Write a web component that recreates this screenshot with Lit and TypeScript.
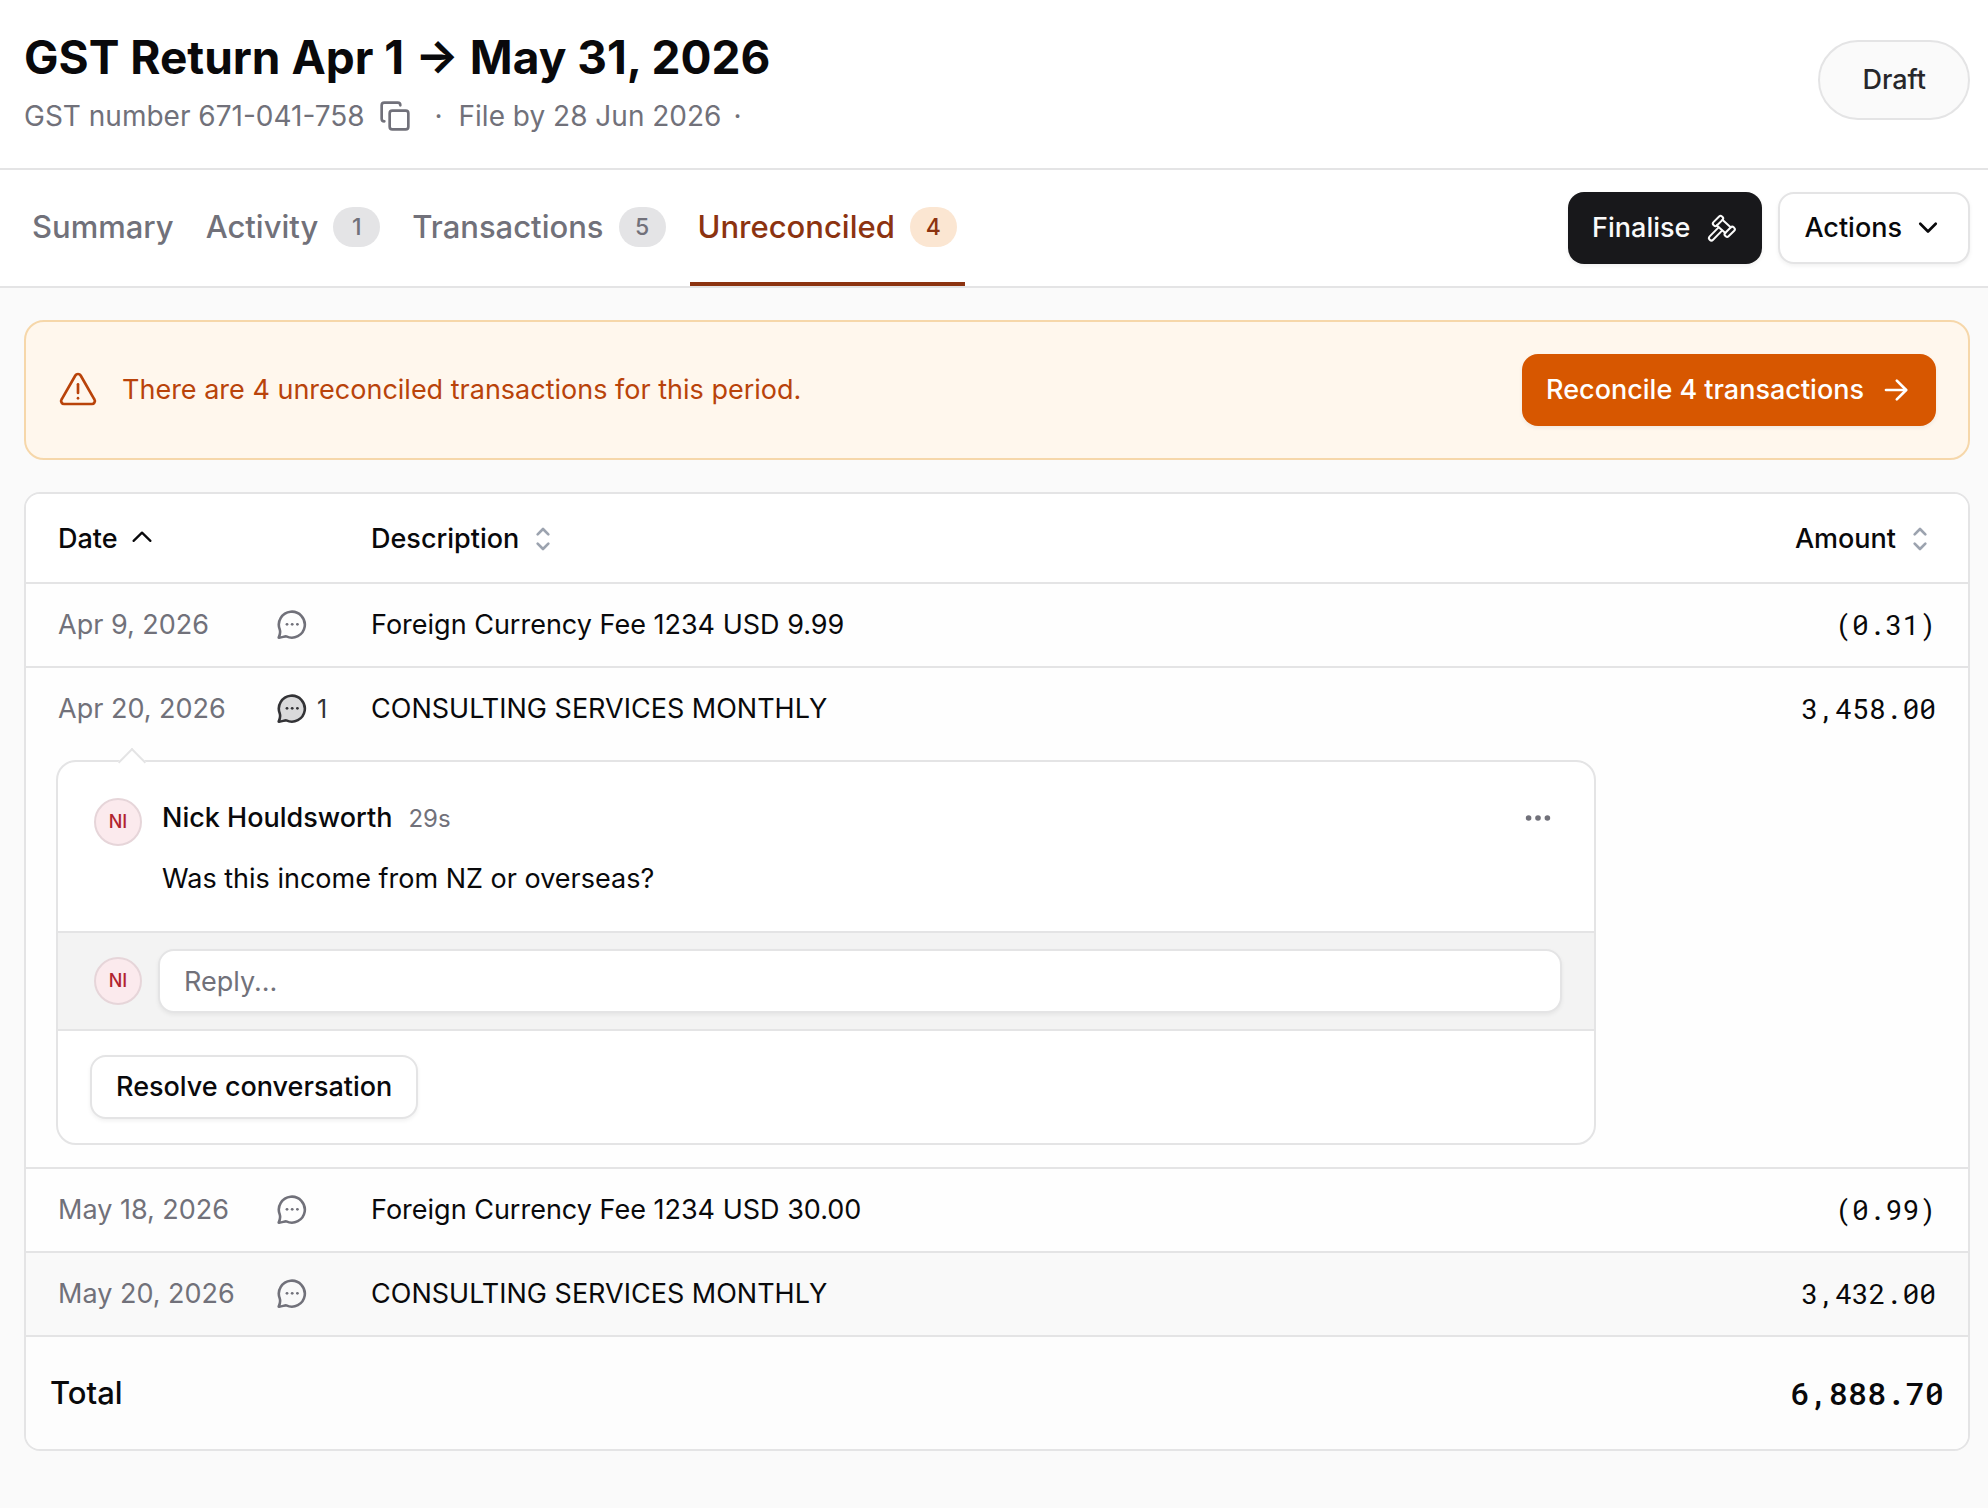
import { LitElement, html, css, svg, nothing } from "lit";
import { customElement, property } from "lit/decorators.js";

interface Transaction {
  date: string;
  description: string;
  amount: string;
  comments: number;
  highlighted?: boolean;
}

interface Tab {
  label: string;
  count?: number;
  active?: boolean;
}

const TABS: Tab[] = [
  { label: "Summary" },
  { label: "Activity", count: 1 },
  { label: "Transactions", count: 5 },
  { label: "Unreconciled", count: 4, active: true },
];

const TRANSACTIONS: Transaction[] = [
  { date: "Apr 9, 2026", description: "Foreign Currency Fee 1234 USD 9.99", amount: "(0.31)", comments: 0 },
  { date: "Apr 20, 2026", description: "CONSULTING SERVICES MONTHLY", amount: "3,458.00", comments: 1 },
  { date: "May 18, 2026", description: "Foreign Currency Fee 1234 USD 30.00", amount: "(0.99)", comments: 0 },
  { date: "May 20, 2026", description: "CONSULTING SERVICES MONTHLY", amount: "3,432.00", comments: 0, highlighted: true },
];

const ICONS = {
  copy: svg`<rect x="8" y="8" width="14" height="14" rx="2" /><path d="M4 16c-1.1 0-2-.9-2-2V4c0-1.1.9-2 2-2h10c1.1 0 2 .9 2 2" />`,
  alert: svg`<path d="M10.4 3.3 2.2 17.6a1.8 1.8 0 0 0 1.6 2.8h16.4a1.8 1.8 0 0 0 1.6-2.8L13.6 3.3a1.85 1.85 0 0 0-3.2 0Z" /><path d="M12 8.6v5.2" /><path d="M12 16.9v.1" />`,
  arrow: svg`<path d="M4.5 12h15" /><path d="m12.6 5 7 7-7 7" />`,
  chevronDown: svg`<path d="m6.2 8.8 5.8 5.8 5.8-5.8" />`,
  chevronUp: svg`<path d="m5.7 13.4 6.3-6.2 6.3 6.2" />`,
  sort: svg`<path d="m8 8.5 4-4 4 4" /><path d="m8 15.5 4 4 4-4" />`,
};

const icon = (name: keyof typeof ICONS, cls: string) => html`
  <svg class="icon ${cls}" viewBox="0 0 24 24" aria-hidden="true">${ICONS[name]}</svg>
`;

const gavel = html`
  <svg class="icon gavel" viewBox="8 6 32 32" aria-hidden="true">
    <rect x="14" y="12.6" width="12" height="4.8" rx="2" transform="rotate(-45 20 15)" />
    <rect x="25.7" y="23.4" width="12" height="4.8" rx="2" transform="rotate(-45 31.7 25.8)" />
    <path d="m24.4 13.8 8.5 7.6M18.8 19.4l8.5 7.6" />
    <path d="m20.6 21.4-8.9 9a2.4 2.4 0 0 0 3.4 3.4l8.9-9.2" />
  </svg>
`;

const bubble = (filled: boolean) => html`
  <svg class="icon bubble ${filled ? "filled" : ""}" viewBox="0 0 30 30" aria-hidden="true">
    <path d="M2.7 19.3A13 13 0 1 1 9.3 26.4C7.4 26 5 27.9 1.7 27.6C2.9 25 3.7 22.2 2.7 19.3Z" />
    <g class="dots"><circle cx="10" cy="14.3" r="1.4" /><circle cx="15.2" cy="14.3" r="1.4" /><circle cx="20.4" cy="14.3" r="1.4" /></g>
  </svg>
`;

const base = css`
  *,
  *::before {
    box-sizing: border-box;
  }
  button,
  input {
    font: inherit;
    color: inherit;
    margin: 0;
  }
  button {
    cursor: pointer;
  }
  .icon {
    flex: none;
    display: block;
    fill: none;
    stroke: currentColor;
    stroke-width: 2;
    stroke-linecap: round;
    stroke-linejoin: round;
  }
  .btn {
    display: inline-flex;
    align-items: center;
    gap: 16px;
    height: 72px;
    padding: 0 24px;
    border: 0;
    border-radius: 16px;
    font-weight: 500;
    white-space: nowrap;
    box-shadow: 0 2px 4px rgb(0 0 0 / 6%);
  }
  .outline {
    gap: 10px;
    background: #fff;
    border: 2px solid #e4e4e5;
  }
`;

@customElement("comment-thread")
export class CommentThread extends LitElement {
  @property() author = "";
  @property() initials = "";
  @property() age = "";
  @property() message = "";

  static styles = [
    base,
    css`
      :host {
        display: block;
        position: relative;
        max-width: 1540px;
        border: 2px solid #e4e4e5;
        border-radius: 20px;
        background: #fff;
      }
      .caret {
        position: absolute;
        left: 64px;
        top: -10px;
        width: 20px;
        height: 20px;
        transform: rotate(45deg);
        background: #fff;
        border: solid #e4e4e5;
        border-width: 2px 0 0 2px;
      }
      .message {
        display: flex;
        gap: 20px;
        padding: 36px 40px 32px 36px;
      }
      .avatar {
        flex: none;
        display: grid;
        place-items: center;
        width: 48px;
        height: 48px;
        border: 2px solid #e6d5d9;
        border-radius: 50%;
        background: #fbeaed;
        color: #b1242f;
        font-size: 18px;
        font-weight: 500;
      }
      .body {
        flex: 1;
        display: flex;
        flex-direction: column;
        gap: 20px;
        line-height: 40px;
      }
      .meta {
        display: flex;
        align-items: baseline;
        gap: 16px;
      }
      .author {
        font-weight: 500;
      }
      .age {
        font-size: 24px;
        color: #71717a;
      }
      p {
        margin: 0;
      }
      .more {
        align-self: flex-start;
        display: flex;
        padding: 4px 0;
        border: 0;
        background: none;
        color: #71717a;
      }
      .more svg {
        width: 32px;
        height: 32px;
        fill: currentColor;
      }
      .reply {
        display: flex;
        align-items: center;
        gap: 16px;
        padding: 16px 32px 16px 36px;
        border: solid #e4e4e5;
        border-width: 2px 0;
        background: #f3f3f3;
      }
      .reply input {
        flex: 1;
        min-width: 0;
        height: 64px;
        padding: 0 24px;
        border: 2px solid #e4e4e5;
        border-radius: 16px;
        background: #fff;
        box-shadow: 0 2px 4px rgb(0 0 0 / 6%);
        outline: none;
      }
      .reply input::placeholder {
        color: #71717a;
        opacity: 1;
      }
      .footer {
        padding: 24px 32px;
        display: flex;
      }
      .footer .btn {
        height: 64px;
      }
    `,
  ];

  render() {
    return html`
      <span class="caret"></span>
      <div class="message">
        <span class="avatar">${this.initials}</span>
        <div class="body">
          <div class="meta"><span class="author">${this.author}</span><span class="age">${this.age}</span></div>
          <p>${this.message}</p>
        </div>
        <button class="more" type="button" aria-label="Comment options">
          <svg viewBox="0 0 32 32" aria-hidden="true">
            <circle cx="6.6" cy="16" r="2.8" /><circle cx="16" cy="16" r="2.8" /><circle cx="25.4" cy="16" r="2.8" />
          </svg>
        </button>
      </div>
      <div class="reply">
        <span class="avatar">${this.initials}</span>
        <input type="text" placeholder="Reply..." aria-label="Reply" />
      </div>
      <div class="footer">
        <button class="btn outline" type="button">Resolve conversation</button>
      </div>
    `;
  }
}

@customElement("app-root")
export class AppRoot extends LitElement {
  static styles = [
    base,
    css`
      :host {
        display: block;
        min-height: 100vh;
        box-sizing: border-box;
        background: #fafafa;
        color: #09090b;
        font-family: Inter, "Liberation Sans", sans-serif;
        font-size: 27px;
        line-height: 36px;
      }
      header {
        display: flex;
        align-items: center;
        justify-content: space-between;
        padding: 26px 18px 34px 24px;
        background: #fff;
        border-bottom: 2px solid #e4e4e5;
      }
      h1 {
        margin: 0 0 10px;
        font-size: 46px;
        line-height: 62px;
        font-weight: 700;
      }
      .subtitle {
        display: flex;
        align-items: center;
        font-size: 28px;
        color: #71717a;
      }
      .copy {
        display: flex;
        margin: 0 24px 0 14px;
        padding: 0;
        border: 0;
        background: none;
      }
      .copy svg {
        width: 32px;
        height: 32px;
      }
      .dot {
        width: 8px;
        text-align: center;
      }
      .due {
        margin: 0 12px 0 16px;
      }
      .status {
        display: flex;
        align-items: center;
        height: 80px;
        padding: 0 42px;
        border: 2px solid #e4e4e5;
        border-radius: 40px;
        background: #fafafa;
        color: #27272a;
        font-weight: 500;
      }
      .bar {
        display: flex;
        align-items: center;
        justify-content: space-between;
        padding: 0 18px 0 24px;
        background: #fff;
        border-bottom: 2px solid #e4e4e5;
      }
      nav {
        display: flex;
        gap: 16px;
      }
      .tab {
        display: flex;
        align-items: center;
        gap: 15px;
        height: 116px;
        padding: 2px 8px 0;
        border-bottom: 4px solid transparent;
        color: #71717a;
        font-size: 31px;
        font-weight: 500;
        text-decoration: none;
      }
      .tab.active {
        color: #8c3310;
        border-color: #8c3310;
      }
      .count {
        display: grid;
        place-items: center;
        min-width: 47px;
        height: 40px;
        border-radius: 20px;
        background: #e4e4e6;
        font-size: 23px;
      }
      .active .count {
        background: #fbe6d2;
      }
      .buttons {
        display: flex;
        gap: 16px;
      }
      .primary {
        background: #18181b;
        color: #fafafa;
      }
      .gavel,
      .chevron,
      .go {
        width: 32px;
        height: 32px;
      }
      main {
        display: flex;
        flex-direction: column;
        gap: 32px;
        padding: 32px 18px 58px 24px;
      }
      .banner {
        display: flex;
        align-items: center;
        gap: 24px;
        padding: 32px;
        border: 2px solid #f6d7aa;
        border-radius: 20px;
        background: #fff7ed;
        color: #b9430a;
      }
      .banner p {
        flex: 1;
        margin: 0;
      }
      .warn {
        width: 40px;
        height: 40px;
        stroke-width: 1.6;
      }
      .accent {
        background: #d75700;
        color: #fff;
      }
      .card {
        border: 2px solid #e4e4e5;
        border-radius: 16px;
        background: #fefefe;
        overflow: hidden;
      }
      table {
        width: 100%;
        table-layout: fixed;
        border-collapse: separate;
        border-spacing: 0;
      }
      .c-date {
        width: 251px;
      }
      .c-note {
        width: 94px;
      }
      .c-amount {
        width: 260px;
      }
      th,
      td {
        padding: 0;
        height: 84px;
        text-align: left;
        font-weight: 400;
        border-bottom: 2px solid #e4e4e5;
      }
      thead th {
        height: 90px;
        background: #fff;
      }
      th:first-child,
      td:first-child {
        padding-left: 32px;
      }
      th:last-child,
      td:last-child {
        padding-right: 32px;
      }
      .sort {
        display: inline-flex;
        align-items: center;
        gap: 8px;
        padding: 0;
        border: 0;
        background: none;
        font-weight: 500;
        vertical-align: middle;
      }
      .sort svg {
        width: 32px;
        height: 32px;
      }
      .sort .asc {
        stroke-width: 1.7;
      }
      .sort .idle {
        color: #9ca3af;
      }
      .date {
        color: #71717a;
      }
      .num {
        text-align: right;
      }
      td.num {
        font-family: "Roboto Mono", "Noto Sans Mono", "Liberation Mono", monospace;
        font-size: 28px;
      }
      .note {
        display: flex;
        align-items: center;
        gap: 10px;
        padding: 0;
        border: 0;
        background: none;
        color: #71717a;
        font-size: 25px;
      }
      .bubble {
        width: 30px;
        height: 30px;
        stroke-width: 2.6;
      }
      .dots {
        fill: currentColor;
        stroke: none;
      }
      .has-comments {
        color: #333336;
      }
      .filled path {
        fill: #dadadb;
      }
      .open td {
        height: 82px;
        border-bottom: 0;
      }
      .thread td {
        padding: 10px 30px 22px;
      }
      .highlighted td {
        background: #f9f9f9;
      }
      tfoot td,
      tfoot th {
        height: 112px;
        border-bottom: 0;
        background: #fdfdfd;
        font-weight: 500;
        font-size: 31px;
      }
      tfoot th:first-child {
        padding-left: 24px;
      }
      tfoot td.num {
        padding-right: 24px;
        font-size: 32px;
      }
    `,
  ];

  private row(t: Transaction) {
    const open = t.comments > 0;
    return html`
      <tr class="${open ? "open" : ""} ${t.highlighted ? "highlighted" : ""}">
        <td class="date">${t.date}</td>
        <td>
          <button class="note ${open ? "has-comments" : ""}" type="button" aria-label="Comments">
            ${bubble(open)}${open ? html`<span>${t.comments}</span>` : nothing}
          </button>
        </td>
        <td>${t.description}</td>
        <td class="num">${t.amount}</td>
      </tr>
      ${open
        ? html`<tr class="thread">
            <td colspan="4">
              <comment-thread
                author="Nick Houldsworth"
                initials="NI"
                age="29s"
                message="Was this income from NZ or overseas?"
              ></comment-thread>
            </td>
          </tr>`
        : nothing}
    `;
  }

  render() {
    return html`
      <header>
        <div>
          <h1>GST Return Apr 1 → May 31, 2026</h1>
          <div class="subtitle">
            <span>GST number 671-041-758</span>
            <button class="copy" type="button" aria-label="Copy GST number">${icon("copy", "")}</button>
            <span class="dot">·</span>
            <span class="due">File by 28 Jun 2026</span>
            <span class="dot">·</span>
          </div>
        </div>
        <span class="status">Draft</span>
      </header>
      <div class="bar">
        <nav>
          ${TABS.map(
            (t) => html`<a class="tab ${t.active ? "active" : ""}" href="#${t.label.toLowerCase()}"
              >${t.label}${t.count ? html`<span class="count">${t.count}</span>` : nothing}</a
            >`,
          )}
        </nav>
        <div class="buttons">
          <button class="btn primary" type="button">Finalise ${gavel}</button>
          <button class="btn outline" type="button">Actions ${icon("chevronDown", "chevron")}</button>
        </div>
      </div>
      <main>
        <section class="banner">
          ${icon("alert", "warn")}
          <p>There are 4 unreconciled transactions for this period.</p>
          <button class="btn accent" type="button">Reconcile 4 transactions ${icon("arrow", "go")}</button>
        </section>
        <section class="card">
          <table>
            <colgroup>
              <col class="c-date" />
              <col class="c-note" />
              <col />
              <col class="c-amount" />
            </colgroup>
            <thead>
              <tr>
                <th scope="col" colspan="2">
                  <button class="sort" type="button">Date ${icon("chevronUp", "asc")}</button>
                </th>
                <th scope="col"><button class="sort" type="button">Description ${icon("sort", "idle")}</button></th>
                <th scope="col" class="num">
                  <button class="sort" type="button">Amount ${icon("sort", "idle")}</button>
                </th>
              </tr>
            </thead>
            <tbody>
              ${TRANSACTIONS.map((t) => this.row(t))}
            </tbody>
            <tfoot>
              <tr>
                <th scope="row" colspan="3">Total</th>
                <td class="num">6,888.70</td>
              </tr>
            </tfoot>
          </table>
        </section>
      </main>
    `;
  }
}
